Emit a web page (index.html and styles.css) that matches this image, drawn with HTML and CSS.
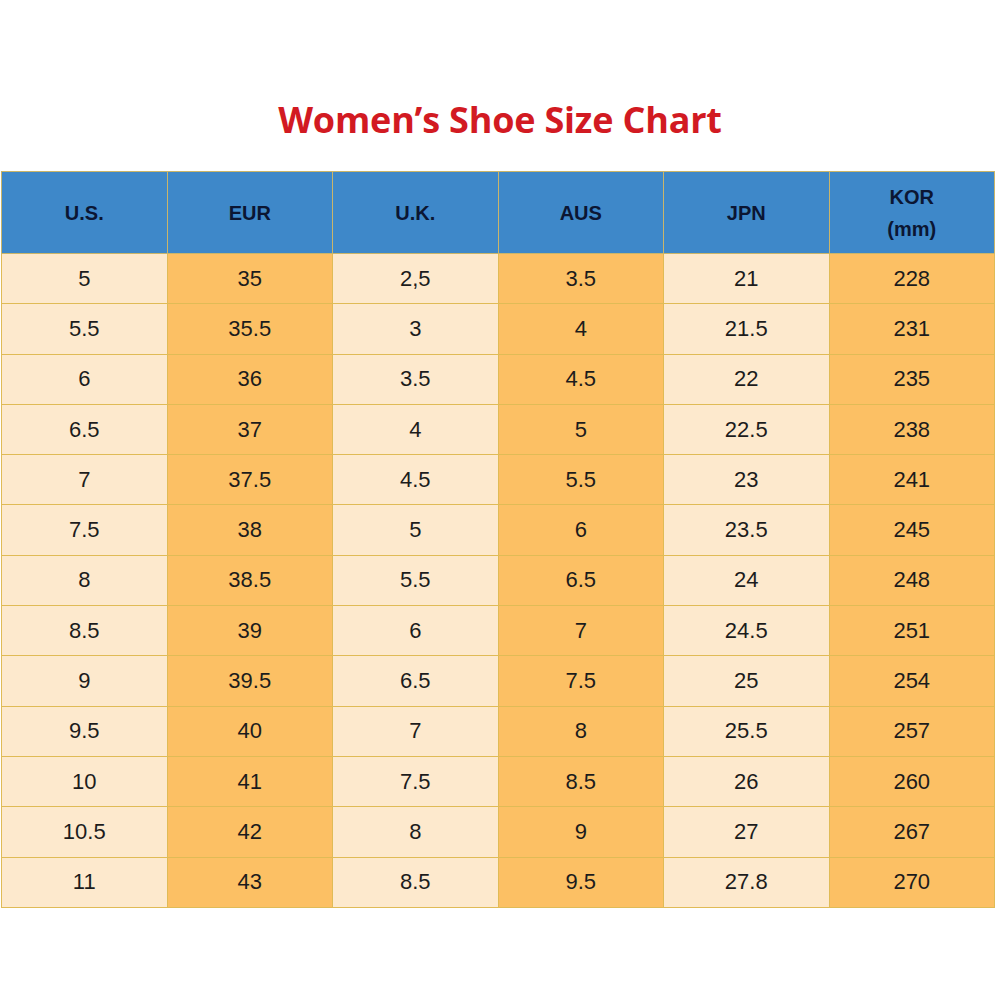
FILE: index.html
```html
<!DOCTYPE html>
<html>
<head>
<meta charset="utf-8">
<link rel="stylesheet" href="styles.css">
</head>
<body>
<h1 class="title">Women’s Shoe Size Chart</h1>
<table class="chart">
<thead>
<tr><th>U.S.</th><th>EUR</th><th>U.K.</th><th>AUS</th><th>JPN</th><th>KOR<br>(mm)</th></tr>
</thead>
<tbody>
<tr><td>5</td><td>35</td><td>2,5</td><td>3.5</td><td>21</td><td>228</td></tr>
<tr><td>5.5</td><td>35.5</td><td>3</td><td>4</td><td>21.5</td><td>231</td></tr>
<tr><td>6</td><td>36</td><td>3.5</td><td>4.5</td><td>22</td><td>235</td></tr>
<tr><td>6.5</td><td>37</td><td>4</td><td>5</td><td>22.5</td><td>238</td></tr>
<tr><td>7</td><td>37.5</td><td>4.5</td><td>5.5</td><td>23</td><td>241</td></tr>
<tr><td>7.5</td><td>38</td><td>5</td><td>6</td><td>23.5</td><td>245</td></tr>
<tr><td>8</td><td>38.5</td><td>5.5</td><td>6.5</td><td>24</td><td>248</td></tr>
<tr><td>8.5</td><td>39</td><td>6</td><td>7</td><td>24.5</td><td>251</td></tr>
<tr><td>9</td><td>39.5</td><td>6.5</td><td>7.5</td><td>25</td><td>254</td></tr>
<tr><td>9.5</td><td>40</td><td>7</td><td>8</td><td>25.5</td><td>257</td></tr>
<tr><td>10</td><td>41</td><td>7.5</td><td>8.5</td><td>26</td><td>260</td></tr>
<tr><td>10.5</td><td>42</td><td>8</td><td>9</td><td>27</td><td>267</td></tr>
<tr><td>11</td><td>43</td><td>8.5</td><td>9.5</td><td>27.8</td><td>270</td></tr>
</tbody>
</table>
</body>
</html>
```
FILE: styles.css
```css
html, body {
  margin: 0;
  padding: 0;
  background: #ffffff;
}
.title {
  margin: 0;
  padding-top: 97px;
  height: 46px;
  padding-bottom: 28px;
  box-sizing: content-box;
  text-align: center;
  font-family: "Open Sans", "Liberation Sans", sans-serif;
  font-weight: 700;
  font-size: 36px;
  line-height: 46px;
  color: #d21a22;
  letter-spacing: -0.2px;
}
.chart {
  margin-left: 1px;
  width: 994px;
  border-collapse: collapse;
  table-layout: fixed;
  font-family: "Liberation Sans", Arial, sans-serif;
  border: 1px solid #e0bb56;
}
.chart th, .chart td {
  border: 1px solid #e0bb56;
  text-align: center;
  padding: 0;
}
.chart th {
  background: #3e88c9;
  color: #0b1633;
  font-weight: 700;
  font-size: 20px;
  line-height: 32px;
  height: 81px;
  border-color: #c9b56a;
}
.chart td {
  height: 49.3px;
  font-size: 22px;
  color: #1c1c1c;
  background: #fde9cd;
}
.chart td:nth-child(even) {
  background: #fcc064;
}
```
